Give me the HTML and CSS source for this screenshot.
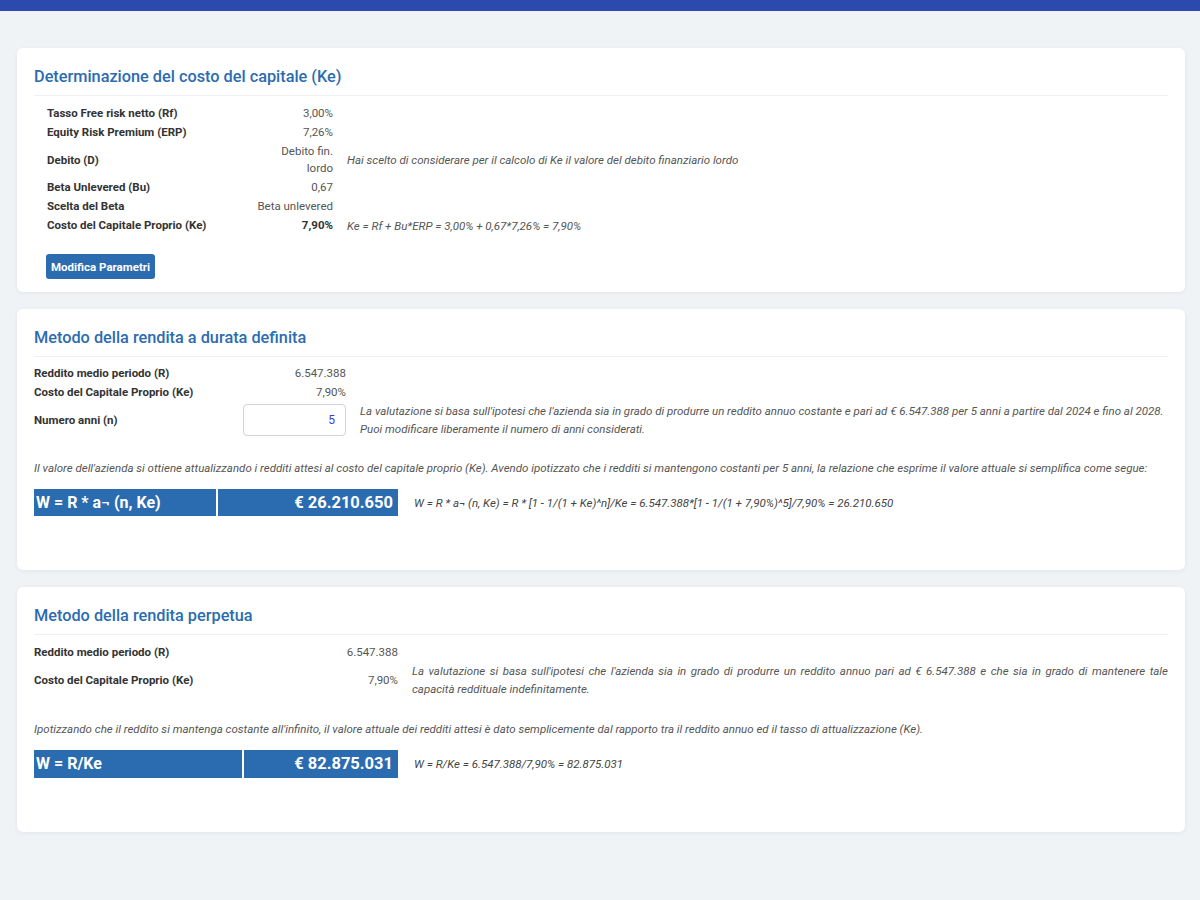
FILE: index.html
```html
<!DOCTYPE html>
<html lang="it">
<head>
<meta charset="utf-8">
<title>Valutazione</title>
<link rel="stylesheet" href="styles.css">
</head>
<body>
<div class="topbar"></div>
<main class="page">
  <section class="card card-ke">
    <h2 class="card-title">Determinazione del costo del capitale (Ke)</h2>
    <div class="grid grid-ke">
      <div class="lbl">Tasso Free risk netto (Rf)</div><div class="val">3,00%</div><div class="note"></div>
      <div class="lbl">Equity Risk Premium (ERP)</div><div class="val">7,26%</div><div class="note"></div>
      <div class="lbl">Debito (D)</div><div class="val">Debito fin. lordo</div><div class="note">Hai scelto di considerare per il calcolo di Ke il valore del debito finanziario lordo</div>
      <div class="lbl">Beta Unlevered (Bu)</div><div class="val">0,67</div><div class="note"></div>
      <div class="lbl">Scelta del Beta</div><div class="val">Beta unlevered</div><div class="note"></div>
      <div class="lbl">Costo del Capitale Proprio (Ke)</div><div class="val strong">7,90%</div><div class="note">Ke = Rf + Bu*ERP = 3,00% + 0,67*7,26% = 7,90%</div>
    </div>
    <button class="btn" type="button">Modifica Parametri</button>
  </section>

  <section class="card card-method">
    <h2 class="card-title">Metodo della rendita a durata definita</h2>
    <div class="grid grid-def">
      <div class="lbl">Reddito medio periodo (R)</div><div class="val">6.547.388</div><div class="note"></div>
      <div class="lbl">Costo del Capitale Proprio (Ke)</div><div class="val">7,90%</div><div class="note"></div>
      <div class="lbl">Numero anni (n)</div><div class="val"><input class="num" type="text" value="5"></div><div class="note">La valutazione si basa sull'ipotesi che l'azienda sia in grado di produrre un reddito annuo costante e pari ad € 6.547.388 per 5 anni a partire dal 2024 e fino al 2028.<br>Puoi modificare liberamente il numero di anni considerati.</div>
    </div>
    <p class="para para-def">Il valore dell'azienda si ottiene attualizzando i redditi attesi al costo del capitale proprio (Ke). Avendo ipotizzato che i redditi si mantengono costanti per 5 anni, la relazione che esprime il valore attuale si semplifica come segue:</p>
    <div class="result result-def">
      <div class="box box-l">W = R * a¬ (n, Ke)</div>
      <div class="box box-r">€ 26.210.650</div>
      <div class="formula">W = R * a¬ (n, Ke) = R * [1 - 1/(1 + Ke)^n]/Ke = 6.547.388*[1 - 1/(1 + 7,90%)^5]/7,90% = 26.210.650</div>
    </div>
  </section>

  <section class="card card-method">
    <h2 class="card-title">Metodo della rendita perpetua</h2>
    <div class="grid grid-perp">
      <div class="lbl">Reddito medio periodo (R)</div><div class="val">6.547.388</div><div class="note"></div>
      <div class="lbl">Costo del Capitale Proprio (Ke)</div><div class="val">7,90%</div><div class="note just">La valutazione si basa sull'ipotesi che l'azienda sia in grado di produrre un reddito annuo pari ad € 6.547.388 e che sia in grado di mantenere tale capacità reddituale indefinitamente.</div>
    </div>
    <p class="para para-perp">Ipotizzando che il reddito si mantenga costante all'infinito, il valore attuale dei redditi attesi è dato semplicemente dal rapporto tra il reddito annuo ed il tasso di attualizzazione (Ke).</p>
    <div class="result result-perp">
      <div class="box box-l">W = R/Ke</div>
      <div class="box box-r">€ 82.875.031</div>
      <div class="formula">W = R/Ke = 6.547.388/7,90% = 82.875.031</div>
    </div>
  </section>
</main>
</body>
</html>
```

FILE: styles.css
```css
* { box-sizing: border-box; }
html, body { margin: 0; padding: 0; }
body {
  background: #eff3f6;
  font-family: Roboto, "Liberation Sans", Arial, sans-serif;
  color: #333;
  font-size: 11.5px;
}
.topbar {
  height: 11px;
  background: #2c4aae;
}
.page {
  padding: 37px 15px 40px 17px;
  display: flex;
  flex-direction: column;
  gap: 17px;
}
.card {
  background: #fff;
  border-radius: 6px;
  box-shadow: 0 1px 4px rgba(40, 60, 90, 0.07);
  padding: 19px 17px 12px 17px;
}
.card-method { padding-bottom: 54px; }
.card-title {
  margin: 0;
  font-size: 16.3px;
  font-weight: 500;
  line-height: 20px;
  color: #2b6cb0;
  padding-bottom: 8px;
  border-bottom: 1px solid #eef1f4;
}
.grid {
  display: grid;
  align-items: center;
  margin-top: 8px;
}
.grid > div {
  line-height: 17px;
  padding: 1px 0;
}
.grid-ke {
  grid-template-columns: 194px 78px 1fr;
  column-gap: 14px;
  margin-left: 13px;
}
.grid-def {
  grid-template-columns: 195px 103px 1fr;
  column-gap: 14px;
  margin-top: 7px;
}
.grid-perp {
  grid-template-columns: 246px 104px 1fr;
  column-gap: 14px;
  margin-top: 8px;
}
.lbl {
  font-weight: 700;
  color: #333;
}
.val {
  text-align: right;
  color: #555;
}
.val.strong { font-weight: 700; color: #333; }
.grid > .note {
  font-style: italic;
  color: #555;
  line-height: 18px;
  padding: 0;
}
.note.just { text-align: justify; }
.num {
  width: 103px;
  height: 32px;
  margin: 1px 0;
  border: 1px solid #cfd4da;
  border-radius: 4px;
  text-align: right;
  padding: 0 10px;
  font-family: inherit;
  font-size: 12px;
  color: #3b3bdc;
  display: block;
}
.btn {
  margin: 19px 0 1px 12px;
  width: 109px;
  height: 25px;
  border: none;
  border-radius: 3px;
  background: #2b6cb0;
  color: #fff;
  font-family: inherit;
  font-weight: 700;
  font-size: 11.5px;
  padding: 0;
  display: block;
}
.para {
  margin: 21px 0 12px 0;
  font-style: italic;
  color: #555;
  line-height: 18px;
}
.para-perp { margin-top: 22px; }
.result {
  display: grid;
  align-items: center;
  column-gap: 2px;
}
.result-def { grid-template-columns: 182px 180px 1fr; }
.result-perp { grid-template-columns: 208px 154px 1fr; }
.result-perp .box { height: 28px; line-height: 28px; }
.box {
  background: #2b6cb0;
  color: #fff;
  font-weight: 700;
  font-size: 16px;
  height: 27px;
  line-height: 27px;
  white-space: nowrap;
}
.box-l { padding-left: 2px; }
.box-r { text-align: right; padding-right: 5px; font-size: 16.5px; }
.formula {
  font-style: italic;
  color: #444;
  padding-left: 14px;
}
```
